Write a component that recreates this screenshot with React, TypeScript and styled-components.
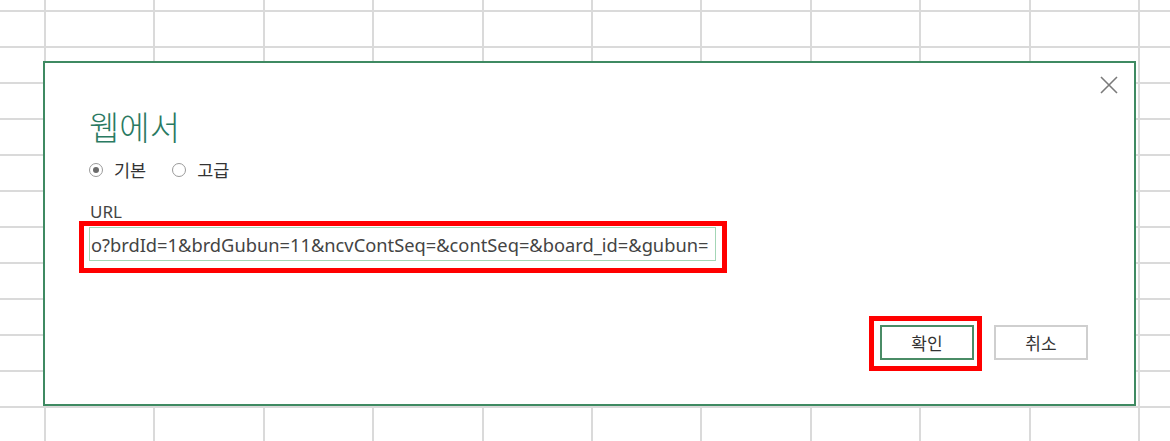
import React from "react";
import styled, { createGlobalStyle } from "styled-components";

const Global = createGlobalStyle`
  html, body { margin: 0; padding: 0; background: #ffffff; }
  body { width: 1170px; height: 441px; overflow: hidden; font-family: "Noto Sans", "Noto Sans CJK KR", sans-serif; }
`;

const Page = styled.div`
  position: relative;
  width: 1170px;
  height: 441px;
  overflow: hidden;
`;

const Sheet = styled.div`
  display: grid;
  grid-template-columns: 46px repeat(11, 109.4px);
  grid-template-rows: 12px repeat(12, 36px);
`;

const Cell = styled.div`
  box-sizing: border-box;
  border-right: 2px solid #dadada;
  border-bottom: 2px solid #dadada;
`;

const Dialog = styled.div`
  position: absolute;
  left: 43px;
  top: 61px;
  width: 1093px;
  height: 345px;
  box-sizing: border-box;
  background: #ffffff;
  border: 2px solid #3f8a62;
  padding: 39px 0 0 44px;
  display: flex;
  flex-direction: column;
`;

const Close = styled.button`
  position: absolute;
  top: 12px;
  right: 15px;
  width: 20px;
  height: 20px;
  padding: 0;
  border: 0;
  background: transparent;
  display: flex;
  align-items: center;
  justify-content: center;
`;

const Title = styled.h1`
  margin: 0;
  font-family: "Noto Sans CJK KR", sans-serif;
  font-weight: 300;
  font-size: 33px;
  line-height: 48px;
  color: #2a7a62;
`;

const RadioRow = styled.div`
  display: flex;
  align-items: center;
  gap: 26px;
  margin-top: 8px;
`;

const RadioLabel = styled.label`
  display: flex;
  align-items: center;
  gap: 11px;
  font-family: "Noto Sans CJK KR", sans-serif;
  font-size: 17.5px;
  line-height: 24px;
  color: #333;
`;

const RadioCircle = styled.span<{ $checked?: boolean }>`
  width: 14px;
  height: 14px;
  box-sizing: border-box;
  border: 1px solid #9a9a9a;
  border-radius: 50%;
  display: flex;
  align-items: center;
  justify-content: center;
  &::after {
    content: "";
    width: 6px;
    height: 6px;
    border-radius: 50%;
    background: ${(p) => (p.$checked ? "#6b6b6b" : "transparent")};
  }
`;

const FieldLabel = styled.div`
  margin-top: 21px;
  margin-left: 1px;
  font-family: "Noto Sans", sans-serif;
  font-size: 17px;
  line-height: 18px;
  color: #444;
`;

const Highlight = styled.div`
  align-self: flex-start;
  margin-left: -10px;
  border: 5px solid #ff0000;
  padding: 1px 6px 7px 5px;
`;

const UrlInput = styled.div`
  width: 627px;
  height: 34px;
  box-sizing: border-box;
  border: 1px solid #a3d6b6;
  display: flex;
  align-items: center;
  padding-left: 1px;
  overflow: hidden;
  white-space: nowrap;
  font-family: "Noto Sans", sans-serif;
  font-size: 18.3px;
  color: #444;
`;

const ButtonRow = styled.div`
  display: flex;
  justify-content: flex-end;
  align-items: flex-start;
  margin-top: 43px;
  margin-right: 46px;
  gap: 12px;
`;

const ButtonFrame = styled.div`
  border: 5px solid #ff0000;
  padding: 4px 3px 6px 6px;
`;

const Button = styled.button<{ $primary?: boolean }>`
  width: 94px;
  height: 35px;
  box-sizing: border-box;
  background: #ffffff;
  border: 2px solid ${(p) => (p.$primary ? "#4a8c66" : "#cfcfcf")};
  font-family: "Noto Sans CJK KR", sans-serif;
  font-size: 17px;
  color: #333;
  padding: 0;
  margin-top: ${(p) => (p.$primary ? "0" : "9px")};
`;

export default function App() {
  const cells = Array.from({ length: 12 * 13 });
  return (
    <Page>
      <Global />
      <Sheet>
        {cells.map((_, i) => (
          <Cell key={i} />
        ))}
      </Sheet>
      <Dialog>
        <Close aria-label="close">
          <svg width="18" height="18" viewBox="0 0 18 18">
            <path d="M1 1 L17 17 M17 1 L1 17" stroke="#7a7a7a" strokeWidth="1.6" fill="none" />
          </svg>
        </Close>
        <Title>웹에서</Title>
        <RadioRow>
          <RadioLabel>
            <RadioCircle $checked />
            기본
          </RadioLabel>
          <RadioLabel>
            <RadioCircle />
            고급
          </RadioLabel>
        </RadioRow>
        <FieldLabel>URL</FieldLabel>
        <Highlight>
          <UrlInput>o?brdId=1&amp;brdGubun=11&amp;ncvContSeq=&amp;contSeq=&amp;board_id=&amp;gubun=</UrlInput>
        </Highlight>
        <ButtonRow>
          <ButtonFrame>
            <Button $primary>확인</Button>
          </ButtonFrame>
          <Button>취소</Button>
        </ButtonRow>
      </Dialog>
    </Page>
  );
}
